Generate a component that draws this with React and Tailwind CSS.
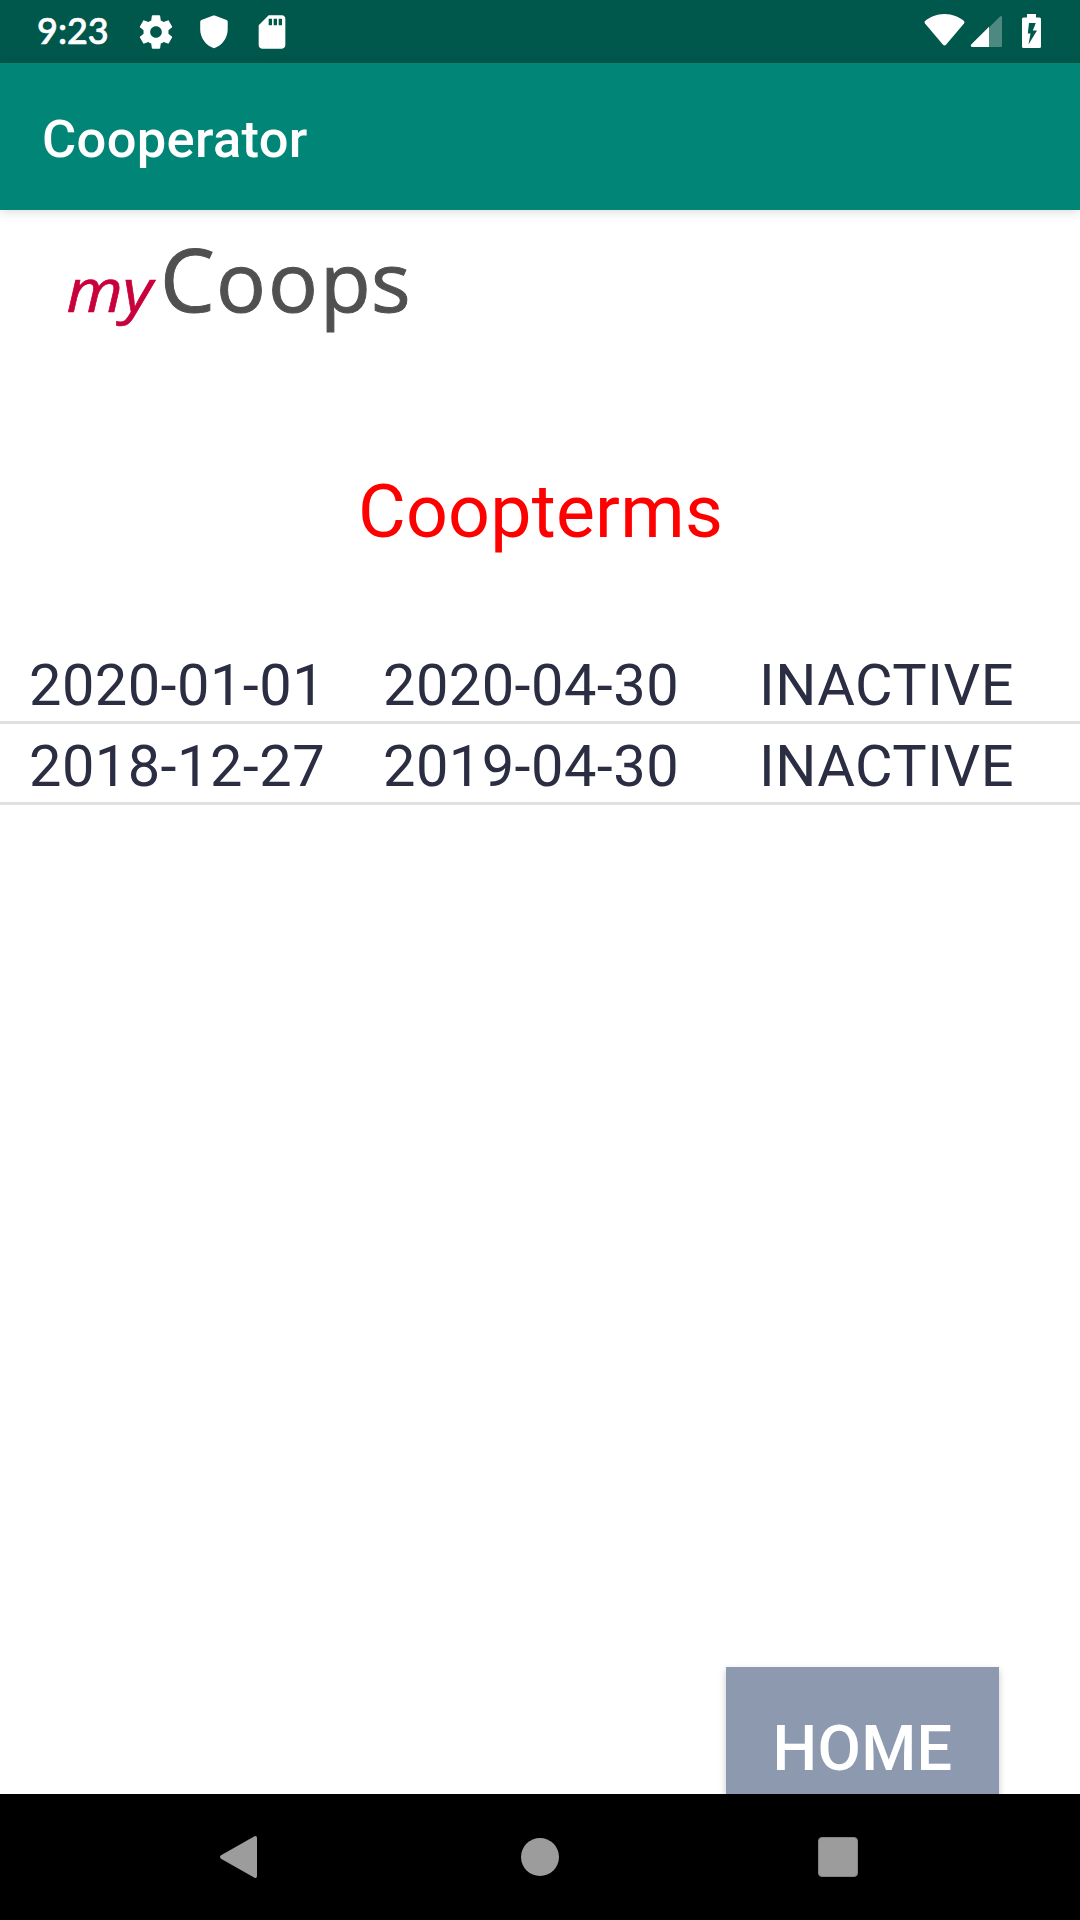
const terms = [
  { start: "2020-01-01", end: "2020-04-30", status: "INACTIVE" },
  { start: "2018-12-27", end: "2019-04-30", status: "INACTIVE" },
];

function StatusBar() {
  return (
    <div className="flex h-[63px] shrink-0 items-center bg-[#00574b] pr-[39px] pl-[37px] text-white">
      <span className="w-[99px] pb-[3px] font-['Lato',sans-serif] text-[36px] leading-[42px] font-medium [-webkit-text-stroke:0.7px_white]">9:23</span>
      <div className="flex gap-[18px]">
        <svg className="h-10 w-10" viewBox="0 0 24 24" fill="currentColor">
          <path d="M19.43 12.98c.04-.32.07-.64.07-.98s-.03-.66-.07-.98l2.11-1.65c.19-.15.24-.42.12-.64l-2-3.46c-.12-.22-.39-.3-.61-.22l-2.49 1c-.52-.4-1.08-.73-1.69-.98l-.38-2.65C14.46 2.18 14.25 2 14 2h-4c-.25 0-.46.18-.49.42l-.38 2.65c-.61.25-1.17.59-1.69.98l-2.49-1c-.23-.09-.49 0-.61.22l-2 3.46c-.13.22-.07.49.12.64l2.11 1.65c-.04.32-.07.65-.07.98s.03.66.07.98l-2.11 1.65c-.19.15-.24.42-.12.64l2 3.46c.12.22.39.3.61.22l2.49-1c.52.4 1.08.73 1.69.98l.38 2.65c.03.24.24.42.49.42h4c.25 0 .46-.18.49-.42l.38-2.65c.61-.25 1.17-.59 1.69-.98l2.49 1c.23.09.49 0 .61-.22l2-3.46c.12-.22.07-.49-.12-.64l-2.11-1.65zM12 15.5c-1.93 0-3.5-1.57-3.5-3.5s1.57-3.5 3.5-3.5 3.5 1.57 3.5 3.5-1.57 3.5-3.5 3.5z" />
        </svg>
        <svg className="h-10 w-10" viewBox="0 0 40 40" fill="currentColor">
          <path d="M19.300 3.600Q20 3.300 20.700 3.600L32.600 8Q33.700 8.500 33.700 9.700V17.500C33.700 25.800 28 33.900 20 36.200C12 33.900 6.200 25.800 6.200 17.500V9.700Q6.200 8.500 7.400 8Z" />
        </svg>
        <svg className="h-10 w-10" viewBox="0 0 24 24" fill="currentColor">
          <path d="M18 2h-8L4.020 8 4 20c0 1.100.9 2 2 2h12c1.100 0 2-.9 2-2V4c0-1.100-.9-2-2-2zm-6 6h-2V4h2v4zm3 0h-2V4h2v4zm3 0h-2V4h2v4z" />
        </svg>
      </div>
      <div className="ml-auto flex">
        <svg className="h-[39px] w-[41px]" viewBox="0 0 41 39" fill="currentColor">
          <path d="M20.500 2C12.500 2 6 5 1 9Q0 10 1 11.400L19 32.800Q20.500 34.400 22 32.800L40 11.400Q41 10 40 9C35 5 28.500 2 20.500 2Z" />
        </svg>
        <svg className="ml-[5px] h-[39px] w-[33px]" viewBox="0 0 33 39" fill="currentColor">
          <path opacity=".3" d="M19 15.500L30 4.500Q32 3.200 32 5V33.500Q32 35 30.500 35H19Z" />
          <path d="M19 14.800V35H2Q0 34.500 1.200 32.600Z" />
        </svg>
        <svg className="ml-[19px] h-[39px] w-[19px]" viewBox="0 0 19 39" fill="currentColor">
          <path fillRule="evenodd" d="M5 2H14V5.500H17.500Q19 5.500 19 7V34.500Q19 36 17.500 36H1.500Q0 36 0 34.500V7Q0 5.500 1.500 5.500H5ZM7 11L5.800 21.500H8.500L6.500 32.500L15 18.500H10.800L13.800 11Z" />
        </svg>
      </div>
    </div>
  );
}

function Logo() {
  return (
    <svg className="mt-[2px] ml-[60px] h-[130px] w-[360px] shrink-0 overflow-visible" viewBox="60 212 360 130" role="img" aria-label="myCoops">
      <text x="66.500" y="312" fontFamily="Open Sans" fontStyle="italic" fontSize="60" textLength="86" lengthAdjust="spacingAndGlyphs" fill="#c8003c" stroke="#c8003c" strokeWidth="0.700">my</text>
      <text y="312" fontFamily="Open Sans" fontSize="83" fill="#505050" stroke="#505050" strokeWidth="1">
        <tspan x="160" fontSize="87">C</tspan>
        <tspan x="216 268 320 371">oops</tspan>
      </text>
    </svg>
  );
}

function TermRow({ start, end, status }) {
  return (
    <div className="flex h-[81px] items-center border-b-3 border-[#e0e0e0] pt-[6px] pl-[29px] text-[57.75px] leading-[68px] tracking-[0.45px] text-[#2b2d42]">
      <span className="w-[354px]">{start}</span>
      <span className="w-[376px]">{end}</span>
      <span>{status}</span>
    </div>
  );
}

function NavBar() {
  return (
    <div className="flex h-[126px] shrink-0 items-center bg-black pl-[219px] text-[#9c9c9c]">
      <svg className="h-[42px] w-[38px]" viewBox="0 0 38 42" fill="currentColor">
        <path d="M35.500 0.300Q38 -0.500 38 2V40Q38 42.500 35.500 41.700L2 22.700Q0 21 2 19.300Z" />
      </svg>
      <div className="ml-[264px] h-[38px] w-[38px] rounded-full bg-[#9c9c9c]" />
      <div className="ml-[259px] h-10 w-10 rounded-[4px] border border-[#858585] bg-[#9c9c9c]" />
    </div>
  );
}

export default function App() {
  return (
    <div className="flex h-[1920px] w-[1080px] flex-col overflow-hidden bg-white font-['Roboto',sans-serif]">
      <StatusBar />
      <header className="z-10 flex h-[147px] shrink-0 items-center bg-[#008577] pl-[42px] shadow-[0_2px_10px_rgba(0,0,0,0.14)]">
        <h1 className="pt-[4px] text-[52.5px] leading-[62px] font-medium tracking-[0.3px] text-white">Cooperator</h1>
      </header>
      <main className="flex min-h-0 grow flex-col overflow-hidden">
        <Logo />
        <h2 className="mt-[127px] h-[86px] pl-px text-center text-[73.5px] leading-[86px] tracking-[0.2px] text-[#ff0000]">Coopterms</h2>
        <div className="mt-[88px]">
          {terms.map((term) => (
            <TermRow key={term.start} {...term} />
          ))}
        </div>
        <button className="mt-auto mr-[81px] flex h-[127px] w-[273px] shrink-0 justify-center self-end bg-[#8d99ae] pt-[45px] text-[63px] leading-[74px] font-medium tracking-[0.3px] text-white shadow-[0_3px_7px_rgba(0,0,0,0.22)]">
          HOME
        </button>
      </main>
      <NavBar />
    </div>
  );
}
